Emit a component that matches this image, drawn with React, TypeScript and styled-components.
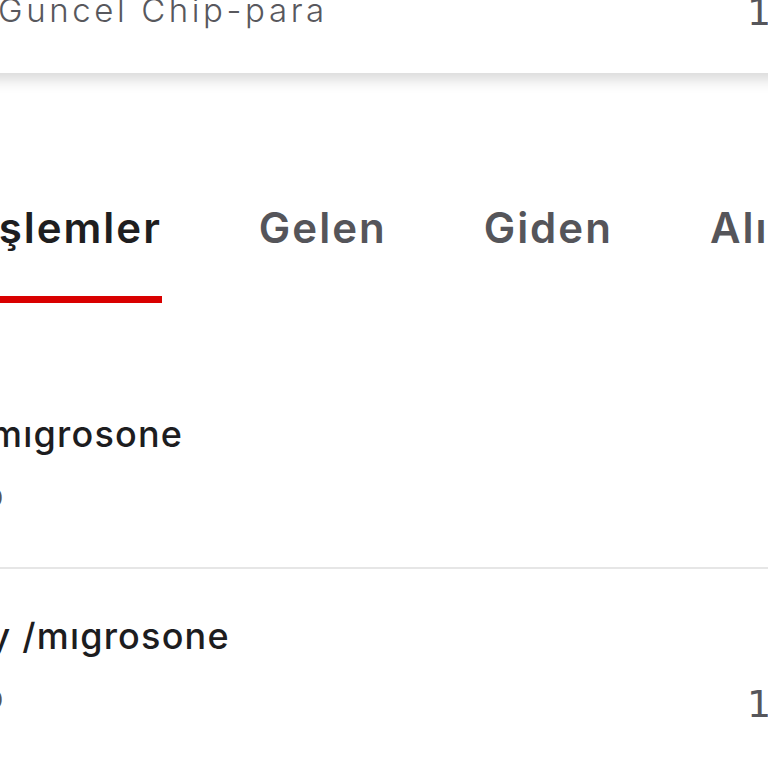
import React from "react";
import styled, { createGlobalStyle } from "styled-components";

const Global = createGlobalStyle`
  html, body {
    margin: 0;
    padding: 0;
    background: #ffffff;
    overflow: hidden;
  }
  body {
    font-family: "Inter", "Noto Sans", sans-serif;
    -webkit-font-smoothing: antialiased;
  }
`;

const Viewport = styled.div`
  width: 768px;
  height: 768px;
  overflow: hidden;
  background: #ffffff;
`;

const Screen = styled.div`
  margin-left: -120px;
  width: 1012px;
  margin-top: -10px;
  display: flex;
  flex-direction: column;
`;

const BalanceCard = styled.div`
  background: #ffffff;
  height: 83px;
  padding: 0 0 0 118px;
  box-sizing: border-box;
  display: flex;
  justify-content: space-between;
  align-items: flex-start;
  box-shadow: 0 7px 13px rgba(0, 0, 0, 0.15);
  position: relative;
  z-index: 1;
`;

const BalanceLabel = styled.span`
  font-family: "Inter", sans-serif;
  font-weight: 350;
  font-size: 33px;
  line-height: 40px;
  letter-spacing: 3.6px;
  color: #58585d;
`;

const Amount = styled.span`
  font-family: "DejaVu Sans", sans-serif;
  font-size: 38px;
  line-height: 40px;
  padding-top: 2px;
  color: #56565b;
`;

const TabBar = styled.div`
  margin-top: 130px;
  display: flex;
  gap: 97px;
  padding-left: 105px;
`;

const Tab = styled.div<{ $active?: boolean }>`
  font-family: "Inter", sans-serif;
  font-weight: 600;
  font-size: 42px;
  line-height: 50px;
  letter-spacing: 2px;
  color: ${(p) => (p.$active ? "#1e1e20" : "#55555a")};
  padding-bottom: 43px;
  border-bottom: 7px solid ${(p) => (p.$active ? "#d90000" : "transparent")};
  white-space: nowrap;
`;

const List = styled.div`
  margin-top: 64px;
  display: flex;
  flex-direction: column;
`;

const Row = styled.div<{ $last?: boolean }>`
  display: grid;
  grid-template-columns: 1fr auto;
  grid-template-rows: auto auto;
  row-gap: 25px;
  padding: 46px 0 51px 8px;
  border-bottom: ${(p) => (p.$last ? "none" : "2px solid #e6e6e6")};
`;

const Title = styled.div`
  grid-column: 1;
  grid-row: 1;
  font-family: "Inter", sans-serif;
  font-weight: 500;
  font-size: 36px;
  line-height: 42px;
  letter-spacing: 1.2px;
  color: #1d1d1f;
  white-space: nowrap;
`;

const Meta = styled.div`
  grid-column: 1;
  grid-row: 2;
  font-family: "Inter", sans-serif;
  font-weight: 400;
  font-size: 23px;
  line-height: 36px;
  color: #55555a;
  white-space: nowrap;
`;

const RowAmount = styled.div`
  grid-column: 2;
  grid-row: 2;
  align-self: end;
  font-family: "DejaVu Sans", sans-serif;
  font-size: 38px;
  line-height: 36px;
  padding-top: 4px;
  color: #56565b;
`;

type Tx = { title: string; meta: string; amount: string };

const txs: Tx[] = [
  { title: "Kart /mıgrosone", meta: "12.10.2020", amount: "" },
  { title: "Money /mıgrosone", meta: "12.10.2020", amount: "10,00 ₺" },
];

export default function App() {
  return (
    <>
      <Global />
      <Viewport>
        <Screen>
          <BalanceCard>
            <BalanceLabel>Guncel Chip-para</BalanceLabel>
            <Amount>10,00 ₺</Amount>
          </BalanceCard>
          <TabBar>
            <Tab $active>İşlemler</Tab>
            <Tab>Gelen</Tab>
            <Tab>Giden</Tab>
            <Tab>Alışveriş</Tab>
          </TabBar>
          <List>
            {txs.map((t, i) => (
              <Row key={i} $last={i === txs.length - 1}>
                <Title>{t.title}</Title>
                <Meta>{t.meta}</Meta>
                <RowAmount>{t.amount}</RowAmount>
              </Row>
            ))}
          </List>
        </Screen>
      </Viewport>
    </>
  );
}
